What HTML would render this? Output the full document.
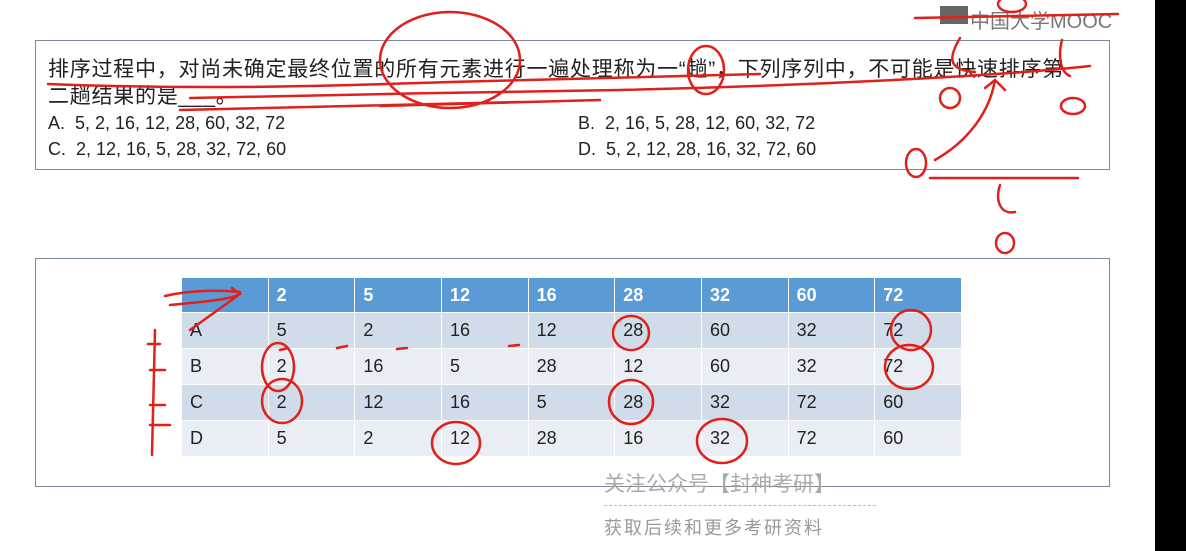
<!DOCTYPE html>
<html><head><meta charset="utf-8"><style>
body{margin:0;width:1186px;height:551px;background:#fff;position:relative;overflow:hidden;font-family:"Liberation Sans","Noto Sans CJK SC",sans-serif;}
.box{position:absolute;border:1.5px solid #7d8a99;background:#fff;}
.q{position:absolute;left:48px;font-size:21px;letter-spacing:0.75px;color:#222;white-space:nowrap;line-height:26px;}
.o{position:absolute;font-size:18px;color:#222;white-space:nowrap;}
table{position:absolute;left:181px;top:277px;border-collapse:collapse;table-layout:fixed;width:781px;font-family:"Liberation Sans Narrow","Liberation Sans",sans-serif;font-size:18px;}
td{padding:0 0 0 8px;height:35px;border:1.5px solid #fff;color:#222;overflow:hidden;}
tr.h td{background:#5b9bd5;color:#fff;font-weight:bold;height:34px;}
tr.a td{background:#d0dcea;}
tr.b td{background:#e9eef5;}
.bar{position:absolute;left:1155px;top:0;width:31px;height:551px;background:#000;}
</style></head><body>
<div class="box" style="left:35px;top:40px;width:1073px;height:128px;"></div>
<div class="q" style="top:57px;">排序过程中，对尚未确定最终位置的所有元素进行一遍处理称为一“趟”，下列序列中，不可能是快速排序第</div>
<div class="q" style="top:84px;">二趟结果的是___。</div>
<div class="o" style="left:48px;top:113px;">A.&nbsp; 5, 2, 16, 12, 28, 60, 32, 72</div>
<div class="o" style="left:578px;top:113px;">B.&nbsp; 2, 16, 5, 28, 12, 60, 32, 72</div>
<div class="o" style="left:48px;top:139px;">C.&nbsp; 2, 12, 16, 5, 28, 32, 72, 60</div>
<div class="o" style="left:578px;top:139px;">D.&nbsp; 5, 2, 12, 28, 16, 32, 72, 60</div>
<div style="position:absolute;left:940px;top:6px;width:28px;height:18px;background:#666;"></div>
<div style="position:absolute;left:970px;top:5px;font-size:20px;color:#777;">中国大学MOOC</div>
<div class="box" style="left:35px;top:258px;width:1073px;height:227px;"></div>
<table>
<tr class="h"><td></td><td>2</td><td>5</td><td>12</td><td>16</td><td>28</td><td>32</td><td>60</td><td>72</td></tr>
<tr class="a"><td>A</td><td>5</td><td>2</td><td>16</td><td>12</td><td>28</td><td>60</td><td>32</td><td>72</td></tr>
<tr class="b"><td>B</td><td>2</td><td>16</td><td>5</td><td>28</td><td>12</td><td>60</td><td>32</td><td>72</td></tr>
<tr class="a"><td>C</td><td>2</td><td>12</td><td>16</td><td>5</td><td>28</td><td>32</td><td>72</td><td>60</td></tr>
<tr class="b"><td>D</td><td>5</td><td>2</td><td>12</td><td>28</td><td>16</td><td>32</td><td>72</td><td>60</td></tr>
</table>
<div style="position:absolute;left:604px;top:468px;font-size:21px;color:#aaa;">关注公众号【封神考研】</div>
<div style="position:absolute;left:604px;top:505px;width:272px;border-top:1px dashed #bbb;"></div>
<div style="position:absolute;left:604px;top:514px;font-size:18px;color:#999;letter-spacing:2px;">获取后续和更多考研资料</div>
<div class="bar"></div>
<svg width="1186" height="551" style="position:absolute;left:0;top:0" fill="none" stroke="#e0201a" stroke-width="2.5" stroke-linecap="round">
<path d="M48 84 C200 90 330 86 450 82 C600 78 700 76 760 74"/>
<path d="M190 98 C300 95 500 92 620 90 C800 86 1000 76 1090 66"/>
<path d="M380 106 C450 104 520 102 600 100"/>
<path d="M180 110 C300 107 420 104 520 102"/>
<ellipse cx="450" cy="60" rx="70" ry="48"/>
<ellipse cx="706" cy="70" rx="18" ry="24"/>
<path d="M915 18 L1118 14"/>
<ellipse cx="1012" cy="4" rx="14" ry="8"/>
<path d="M960 38 C950 55 945 70 975 72"/><path d="M1062 40 C1058 55 1060 72 1070 76"/>
<ellipse cx="950" cy="98" rx="10" ry="10"/><ellipse cx="1073" cy="106" rx="12" ry="8"/>
<ellipse cx="916" cy="163" rx="10" ry="14"/>
<path d="M935 160 C970 140 990 110 995 80 M985 88 L995 80 L1005 90"/>
<path d="M930 178 L1078 178"/>
<path d="M1000 185 C995 200 1000 215 1015 212"/>
<ellipse cx="1005" cy="243" rx="9" ry="10"/>
<path d="M165 296 C190 290 220 290 240 292 M170 305 C200 302 230 300 240 294 L232 288 M240 294 L190 330"/>
<path d="M155 330 L152 455 M148 344 L160 344 M150 370 L165 370 M150 405 L165 405 M150 425 L170 425"/>
<ellipse cx="631" cy="333" rx="18" ry="17"/><ellipse cx="911" cy="330" rx="20" ry="20"/>
<ellipse cx="909" cy="367" rx="24" ry="22"/><ellipse cx="278" cy="367" rx="16" ry="24"/>
<ellipse cx="282" cy="401" rx="20" ry="22"/><ellipse cx="631" cy="402" rx="22" ry="22"/>
<ellipse cx="456" cy="443" rx="24" ry="21"/><ellipse cx="722" cy="441" rx="25" ry="22"/>
<path d="M280 350 l8 -2 M337 348 l10 -2 M397 349 l10 -1 M509 346 l10 -1"/>
</svg>
</body></html>
